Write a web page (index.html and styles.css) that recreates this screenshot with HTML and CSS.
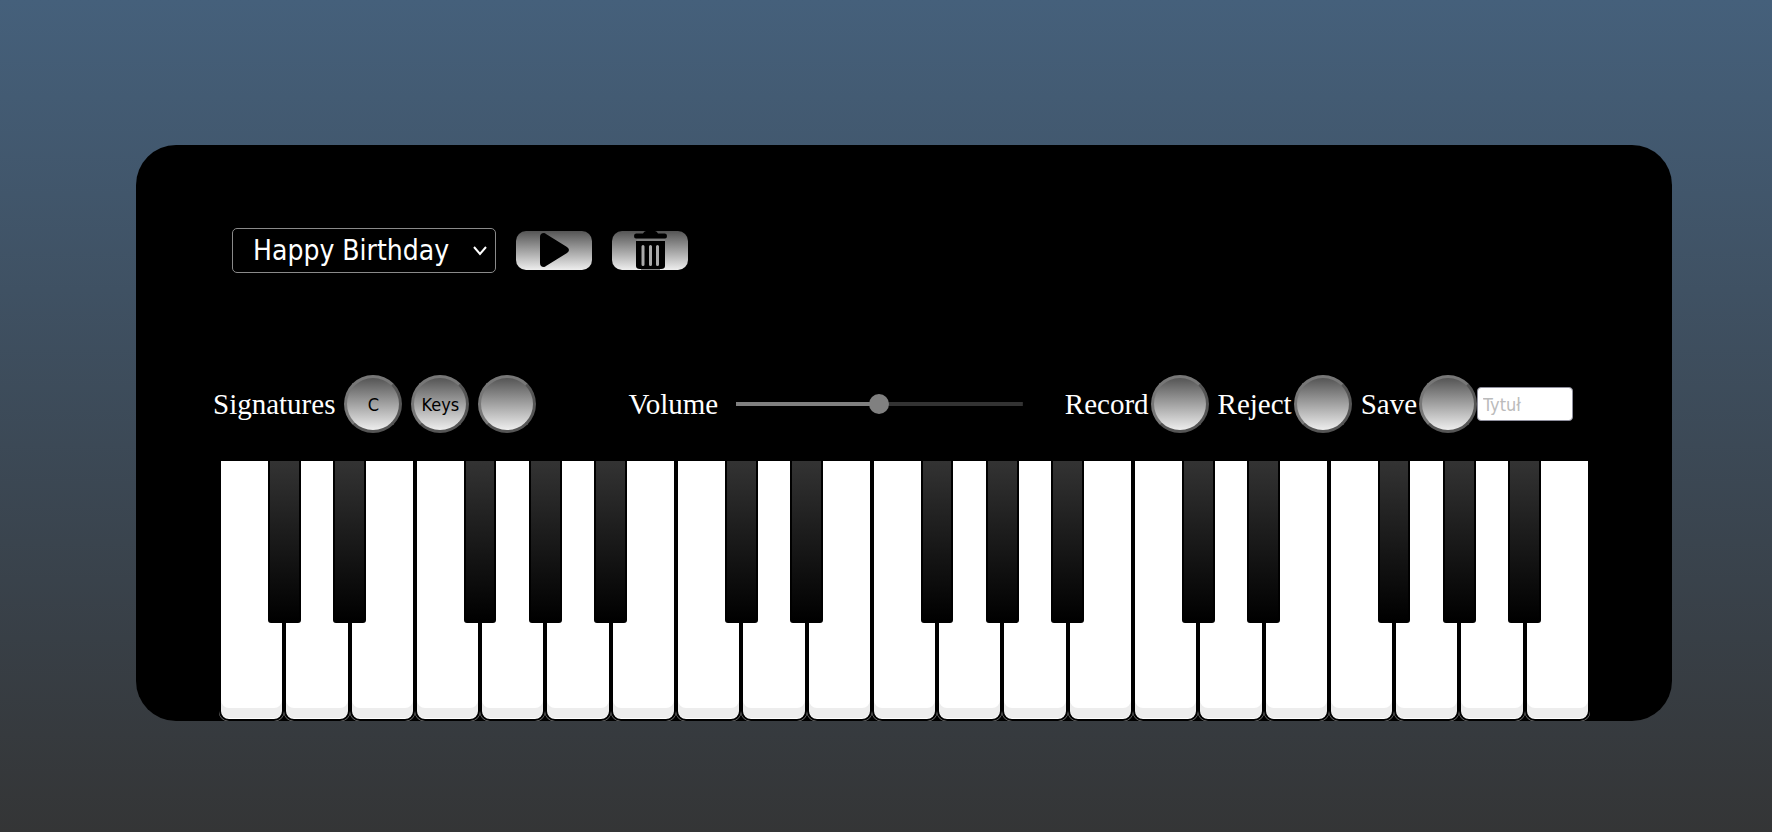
FILE: index.html
```html
<!DOCTYPE html>
<html lang="en">
<head>
<meta charset="utf-8">
<title>Piano</title>
<link rel="stylesheet" href="styles.css">
</head>
<body>
<main class="piano">
  <div class="player">
    <select class="song" aria-label="Song"><option>Happy Birthday</option></select>
    <button class="action" type="button" aria-label="Play">
      <svg width="76" height="39" viewBox="0 0 76 39"><path d="M24 6v26q0 4 4 4q1 0 2-1l21-13q4-3 0-6L30 3q-1-1-2-1q-4 0-4 4z"/></svg>
    </button>
    <button class="action" type="button" aria-label="Delete">
      <svg width="76" height="39" viewBox="0 0 76 39"><path d="M31 2.500q1-2.500 3-2.500h9q2 0 3 2.500h7q2 0 2 2.500t-2 2.500H24q-2 0-2-2.500t2-2.500zM24 10h29v25q0 3-4 3H28q-4 0-4-3z"/><path class="seam" d="M25 9h28M29 38.500h19"/><path class="slots" d="M31 15.500v18M38.500 15.500v18M45.500 15.500v18"/></svg>
    </button>
  </div>
  <div class="controls">
    <div class="group signatures">
      <span class="caption">Signatures</span>
      <button class="knob" type="button">C</button>
      <button class="knob" type="button">Keys</button>
      <button class="knob" type="button" aria-label="Off"></button>
    </div>
    <div class="group volume">
      <label class="caption" for="volume">Volume</label>
      <input class="slider" id="volume" type="range" min="0" max="100" value="50">
    </div>
    <div class="group recorder">
      <label class="field"><span class="caption">Record</span><button class="knob" type="button"></button></label>
      <label class="field"><span class="caption">Reject</span><button class="knob" type="button"></button></label>
      <div class="saver">
        <label class="field"><span class="caption">Save</span><button class="knob" type="button"></button></label>
        <input class="title" type="text" placeholder="Tytuł" aria-label="Tytuł">
      </div>
    </div>
  </div>
  <div class="keys" id="keys"></div>
</main>
<script src="script.js"></script>
</body>
</html>
```
FILE: styles.css
```css
* { box-sizing: border-box; }
html { min-height: 100%; background: linear-gradient(#45607b, #343536); }
body { margin: 0; padding: 145px 100px 111px 136px; }
.piano { background: #000; border-radius: 40px; padding-top: 83px; color: #fff; }
button, input, select { font-family: "DejaVu Sans Condensed", "Noto Sans", sans-serif; }
.player { display: flex; align-items: center; gap: 20px; padding-left: 96px; }
.song {
  appearance: none;
  width: 264px; height: 45px; padding: 0 20px;
  border: 1px solid #8a8a8a; border-radius: 5px;
  color: #fff; font-size: 28px; line-height: 43px;
  background: #000 url("data:image/svg+xml,%3Csvg xmlns='http://www.w3.org/2000/svg' width='14' height='10'%3E%3Cpath d='M1 1l6 7 6-7' fill='none' stroke='white' stroke-width='2'/%3E%3C/svg%3E") no-repeat right 8px center;
}
.action, .knob { background-image: linear-gradient(#555, #eee); }
.action { width: 76px; height: 39px; padding: 0; border: 0; border-radius: 10px; overflow: hidden; }
.action svg { display: block; }
.slots { fill: none; stroke: #aaa; stroke-width: 3; stroke-linecap: round; }
.seam { fill: none; stroke: #888; stroke-width: 1; }
.controls { display: flex; align-items: center; padding: 102px 99px 26px 77px; }
.group, .field, .saver { display: flex; align-items: center; }
.caption { font: 29px/34px "Liberation Serif", serif; }
.signatures { gap: 9px; margin-right: 92px; }
.volume { flex: 1; gap: 18px; margin-right: 42px; }
.recorder { gap: 9px; }
.field { gap: 2px; }
.knob {
  width: 58px; height: 58px; padding: 0; flex: none;
  border: 3px solid; border-color: #777 #555 #555 #777; border-radius: 50%;
  font-size: 18px; color: #000;
}
.slider {
  appearance: none; flex: 1; min-width: 0; height: 20px; margin: 0;
  background: linear-gradient(90deg, #808080 50%, #333 50%) center / 100% 4px no-repeat;
}
.slider::-webkit-slider-thumb { appearance: none; width: 20px; height: 20px; border-radius: 50%; background: #808080; }
.title { width: 96px; height: 34px; padding: 0 5px; border: 1px solid #8f8f9d; border-radius: 4px; font-size: 18px; }
.title::placeholder { color: #bbb; }
.keys { display: grid; grid-template-columns: repeat(21, 1fr); padding: 0 82px 0 83px; }
.key {
  position: relative; height: 262px; padding: 0;
  border: 2px solid #000; border-radius: 0 0 10px 10px; background: #fff;
  box-shadow: inset 0 -1px #fff, inset 0 -11px #ededed;
}
.pair {
  position: relative; display: grid;
  background:
    radial-gradient(circle at 100% 0, #777 10px, transparent 11px) 0 100% / 10px 10px no-repeat,
    radial-gradient(circle at 0 0, #777 10px, transparent 11px) 100% 100% / 10px 10px no-repeat;
}
.sharp {
  position: absolute; z-index: 1; top: 0; left: 100%; width: 50%; height: 164px; margin-left: -25%; padding: 0;
  border: 2px solid #000; border-radius: 0 0 3px 3px; background: linear-gradient(#333, #000);
}
```
FILE: script.js
```js
const keys = document.getElementById("keys");
const notes = ["C", "D", "E", "F", "G", "A", "B"];
const makeKey = (className, name) => {
  const key = document.createElement("button");
  key.type = "button";
  key.className = className;
  key.setAttribute("aria-label", name);
  return key;
};
for (let octave = 3; octave < 6; octave++) {
  for (const note of notes) {
    const pair = document.createElement("div");
    pair.className = "pair";
    pair.append(makeKey("key", note + octave));
    if (note !== "E" && note !== "B") pair.append(makeKey("sharp", note + "#" + octave));
    keys.append(pair);
  }
}
```
